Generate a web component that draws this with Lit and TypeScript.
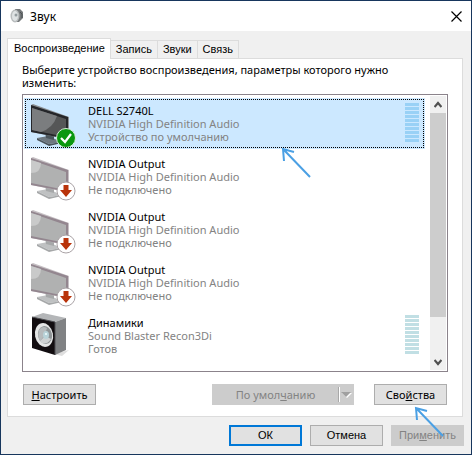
import { LitElement, html, css, svg } from "lit";
import { customElement, property, state } from "lit/decorators.js";
import { classMap } from "lit/directives/class-map.js";

type Kind = "default" | "unplugged" | "speaker";

interface Device {
  name: string;
  driver: string;
  status: string;
  kind: Kind;
  meter: boolean;
}

const DEVICES: Device[] = [
  { name: "DELL S2740L", driver: "NVIDIA High Definition Audio", status: "Устройство по умолчанию", kind: "default", meter: true },
  { name: "NVIDIA Output", driver: "NVIDIA High Definition Audio", status: "Не подключено", kind: "unplugged", meter: false },
  { name: "NVIDIA Output", driver: "NVIDIA High Definition Audio", status: "Не подключено", kind: "unplugged", meter: false },
  { name: "NVIDIA Output", driver: "NVIDIA High Definition Audio", status: "Не подключено", kind: "unplugged", meter: false },
  { name: "Динамики", driver: "Sound Blaster Recon3Di", status: "Готов", kind: "speaker", meter: true },
];

const TABS = ["Воспроизведение", "Запись", "Звуки", "Связь"];

@customElement("device-icon")
export class DeviceIcon extends LitElement {
  @property() kind: Kind = "default";

  static styles = css`
    :host { display: block; width: 48px; height: 48px; }
    svg { display: block; }
  `;

  private monitor(active: boolean) {
    const frame = active ? "#25262a" : "#93868f";
    const screen = active ? "#555657" : "#b0b1b1";
    const glow = active ? "#7b7d7f" : "#c9caca";
    const stand = active ? "#6e7880" : "#bfc1c2";
    const shade = active ? "#4b555c" : "#a6a8a9";
    return svg`
      <path d="M13 39 L24 37 L38 43 L25 45 Z" fill=${stand}/>
      <path d="M13 39 L25 45 L38 43 L38 44 L25 47 L13 41 Z" fill=${shade}/>
      <path d="M21 32 L30 35 L30 41 L22 39 Z" fill=${shade}/>
      <path d="M7 6 L9 5 L45 18 L45 40 L42 40 L7 33 Z" fill=${active ? "#8b8f92" : "#c6c0c4"}/>
      <path d="M7 6 L44 18 L44 40 L7 33 Z" fill=${frame}/>
      <path d=${active ? "M8 9 L42 20 L42 38 L8 31 Z" : "M7 8 L42 20 L42 38 L7 31 Z"} fill=${screen}/>
      <path d=${active ? "M8 9 L33 17 Q29 29 17 33 L8 31 Z" : "M7 8 L17 11 Q17 21 7 21 Z"} fill=${glow}/>`;
  }

  private speaker() {
    return svg`
      <path d="M30 43 L45 39 L38 45 Z" fill="#dedede"/>
      <path d="M8 6 L19 2 L42 7 L31 11 Z" fill="#b4b6b8"/>
      <path d="M31 11 L42 7 L42 39 L31 44 Z" fill="#808284"/>
      <path d="M8 6 L31 11 L31 44 L8 37 Z" fill="#120d10"/>
      <path d="M8 6 L31 11 L31 44" fill="none" stroke="#4c4c50"/>
      <ellipse cx="20" cy="24" rx="9" ry="12" transform="rotate(-12 20 24)" fill="#e5e6e6"/>
      <ellipse cx="21" cy="24" rx="7" ry="9" transform="rotate(-12 21 24)" fill="#8f9496"/>
      <path d="M15 19 Q18 14 23 17 L21 24 L16 30 Q13 25 15 19 Z" fill="#b7bbbd"/>
      <path d="M16 30 L21 25 L27 28 Q23 34 18 32 Z" fill="#cfd2d3"/>
      <ellipse cx="22" cy="24" rx="3" ry="4" fill="#b9d3d9"/>
      <circle cx="22" cy="23" r="1" fill="#f2ffff"/>`;
  }

  render() {
    return html`<svg width="54" height="51" viewBox="0 0 54 51" aria-hidden="true">
      ${this.kind === "speaker" ? this.speaker() : this.monitor(this.kind === "default")}
      ${this.kind === "default"
        ? svg`<circle cx="42" cy="39" r="9.5" fill="#0a970f" stroke="#d6ebd8"/>
              <path d="M37 39 L41 43 L47 35" fill="none" stroke="#fff" stroke-width="2.2"/>`
        : ""}
      ${this.kind === "unplugged"
        ? svg`<circle cx="42" cy="39" r="9" fill="#fff" stroke="#aaa3a6"/>
              <path d="M39.5 33 H44.5 V38 H48 L42 45 L36 38 H39.5 Z" fill="#b9330a"/>`
        : ""}
    </svg>`;
  }
}

@customElement("level-meter")
export class LevelMeter extends LitElement {
  static styles = css`
    :host { display: flex; flex-direction: column; gap: 1px; width: 14px; }
    .bar { height: 3px; background: var(--bar); }
  `;
  render() {
    return Array.from({ length: 10 }, () => html`<div class="bar"></div>`);
  }
}

@customElement("app-root")
export class AppRoot extends LitElement {
  @state() private tab = 0;
  @state() private selected = 0;

  static styles = css`
    :host {
      display: block;
      font: 11px/13px "Noto Sans", "Open Sans", sans-serif;
      color: #000;
    }
    * { box-sizing: border-box; }
    button { font: inherit; color: inherit; padding: 0; margin: 0; }
    .window {
      display: flex;
      flex-direction: column;
      min-height: 100vh;
      border: 1px solid #17365d;
      background: #f0f0f0;
    }
    .titlebar {
      display: flex;
      align-items: center;
      height: 30px;
      padding: 0 9px;
      gap: 6px;
      background: #fff;
    }
    .titlebar h1 { flex: 1; margin: 0; font: inherit; font-size: 12px; }
    .close { display: flex; border: 0; background: none; }
    .content { display: flex; flex-direction: column; flex: 1; padding: 7px 7px 8px 6px; }
    .tabs { display: flex; align-items: flex-end; height: 20px; }
    .tab {
      height: 18px;
      padding: 0 5px;
      border: 1px solid #dcdcdc;
      border-left-width: 0;
      border-bottom: 0;
      background: #f0f0f0;
      font-family: "Liberation Sans", Arial, sans-serif;
    }
    .tab.active {
      position: relative;
      height: 21px;
      margin-bottom: -1px;
      padding: 0 5px 2px 6px;
      border-left-width: 1px;
      background: #fff;
    }
    .panel {
      flex: 1;
      border: 1px solid #dcdcdc;
      background: #fff;
      padding: 4px 14px 10px;
      margin-right: 1px;
    }
    .hint { margin: 0; height: 31px; }
    .list { display: flex; height: 278px; border: 1px solid #8b838b; padding: 1px; }
    .items { flex: 1; margin: 0; padding: 2px 5px 0 0; list-style: none; }
    .item {
      display: flex;
      position: relative;
      height: 51px;
      margin-bottom: 2px;
      padding: 5px 6px 0 0;
      --bar: #c1dfe4;
    }
    .item.selected { background: #cce8ff; --bar: #99d1f6; }
    .item.selected::before {
      content: "";
      position: absolute;
      inset: 1px;
      --dots: #000 0 1px, transparent 1px 2px;
      background:
        repeating-linear-gradient(90deg, var(--dots)) top / 100% 1px no-repeat,
        repeating-linear-gradient(90deg, var(--dots)) bottom / 100% 1px no-repeat,
        repeating-linear-gradient(var(--dots)) left / 1px 100% no-repeat,
        repeating-linear-gradient(var(--dots)) right / 1px 100% no-repeat;
    }
    .icon { width: 64px; margin-top: -4px; }
    .text { flex: 1; color: #838383; margin-top: 1px; }
    .name { color: #000; }
    .scrollbar { display: flex; flex-direction: column; width: 16px; background: #f0f0f0; }
    .scrollbar button { display: flex; align-items: center; justify-content: center; height: 17px; border: 0; background: none; }
    .thumb { height: 204px; background: #cdcdcd; }
    .gap { flex: 1; }
    .row { display: flex; align-items: center; }
    .row.inner { margin-top: 12px; padding: 0 1px; }
    .row.outer { justify-content: flex-end; gap: 8px; margin-top: 8px; }
    .btn {
      position: relative;
      width: 73px;
      height: 21px;
      border: 1px solid #adadad;
      background: #e1e1e1;
    }
    .btn.primary { border: 2px solid #0078d7; }
    .btn:disabled { border-color: #cccccc; background: #cccccc; color: #838383; }
    .btn.split { display: flex; align-items: center; width: 142px; margin-right: 20px; }
    .split .label { flex: 1; }
    .row.outer .btn { font-family: "Liberation Sans", Arial, sans-serif; }
    .arrow { position: absolute; pointer-events: none; z-index: 2; }
    .on-item { left: 257px; top: 49px; }
    .on-button { left: 39px; top: 21px; }
  `;

  private arrow(place: string) {
    return html`<svg class="arrow ${place}" width="32" height="32" viewBox="0 0 32 32" aria-hidden="true">
      <path d="M3 3 L29 30 M3 14 L2 2 L13 5" fill="none" stroke="#4ba0e4" stroke-width="2"/>
    </svg>`;
  }

  private chevron(d: string) {
    return html`<svg width="8" height="8" viewBox="0 0 8 8" aria-hidden="true">
      <path d=${d} fill="none" stroke="#505050" stroke-width="2.2"/>
    </svg>`;
  }

  render() {
    return html`
      <main class="window">
        <header class="titlebar">
          <svg width="14" height="14" viewBox="0 0 14 14" aria-hidden="true">
            <path d="M5 0 L10 0 L13 3 L13 9 L9 13 L5 13 Z" fill="#74787a"/>
            <ellipse cx="5" cy="7" rx="4.5" ry="6.5" fill="#b9bdbe"/>
            <ellipse cx="5" cy="7" rx="3" ry="5" fill="#dfe3e4"/>
            <circle cx="6" cy="6" r="1.5" fill="#949da0"/>
            <path d="M10 3 L12 5 V9" fill="none" stroke="#4d5254"/>
          </svg>
          <h1>Звук</h1>
          <button class="close" aria-label="Закрыть">
            <svg width="11" height="11" viewBox="0 0 11 11"><path d="M.5 .5 L10.5 10.5 M10.5 .5 L.5 10.5" stroke="#000" stroke-width="1.2"/></svg>
          </button>
        </header>
        <div class="content">
          <div class="tabs" role="tablist">
            ${TABS.map((t, i) => html`<button role="tab" aria-selected=${i === this.tab}
              class=${classMap({ tab: true, active: i === this.tab })}
              @click=${() => (this.tab = i)}>${t}</button>`)}
          </div>
          <section class="panel" role="tabpanel">
            <p class="hint">Выберите устройство воспроизведения, параметры которого нужно<br>изменить:</p>
            <div class="list">
              <ul class="items" role="listbox" aria-label="Устройства">
                ${DEVICES.map((d, i) => html`
                  <li role="option" aria-selected=${i === this.selected}
                    class=${classMap({ item: true, selected: i === this.selected })}
                    @click=${() => (this.selected = i)}>
                    <device-icon class="icon" .kind=${d.kind}></device-icon>
                    <div class="text">
                      <div class="name">${d.name}</div>
                      <div>${d.driver}</div>
                      <div>${d.status}</div>
                    </div>
                    ${d.meter ? html`<level-meter></level-meter>` : ""}
                    ${i === 0 ? this.arrow("on-item") : ""}
                  </li>`)}
              </ul>
              <div class="scrollbar">
                <button aria-label="Вверх">${this.chevron("M0.5 6 L4 2 L7.5 6")}</button>
                <div class="thumb"></div>
                <div class="gap"></div>
                <button aria-label="Вниз">${this.chevron("M0.5 2 L4 6 L7.5 2")}</button>
              </div>
            </div>
            <div class="row inner">
              <button class="btn"><u>Н</u>астроить</button>
              <div class="gap"></div>
              <button class="btn split" disabled>
                <span class="label">По умол<u>ч</u>анию</span>
                <svg width="15" height="15" viewBox="0 0 15 15" aria-hidden="true">
                  <path d="M1.5 0 V15" stroke="#fff"/><path d="M.5 0 V15" stroke="#a8a8a8"/>
                  <path d="M4 6 H14 L9 11 Z" fill="#fff"/><path d="M3 5 H13 L8 10 Z" fill="#a0a0a0"/>
                </svg>
              </button>
              <button class="btn">Сво<u>й</u>ства${this.arrow("on-button")}</button>
            </div>
          </section>
          <div class="row outer">
            <button class="btn primary">ОК</button>
            <button class="btn">Отмена</button>
            <button class="btn" disabled>При<u>м</u>енить</button>
          </div>
        </div>
      </main>`;
  }
}
